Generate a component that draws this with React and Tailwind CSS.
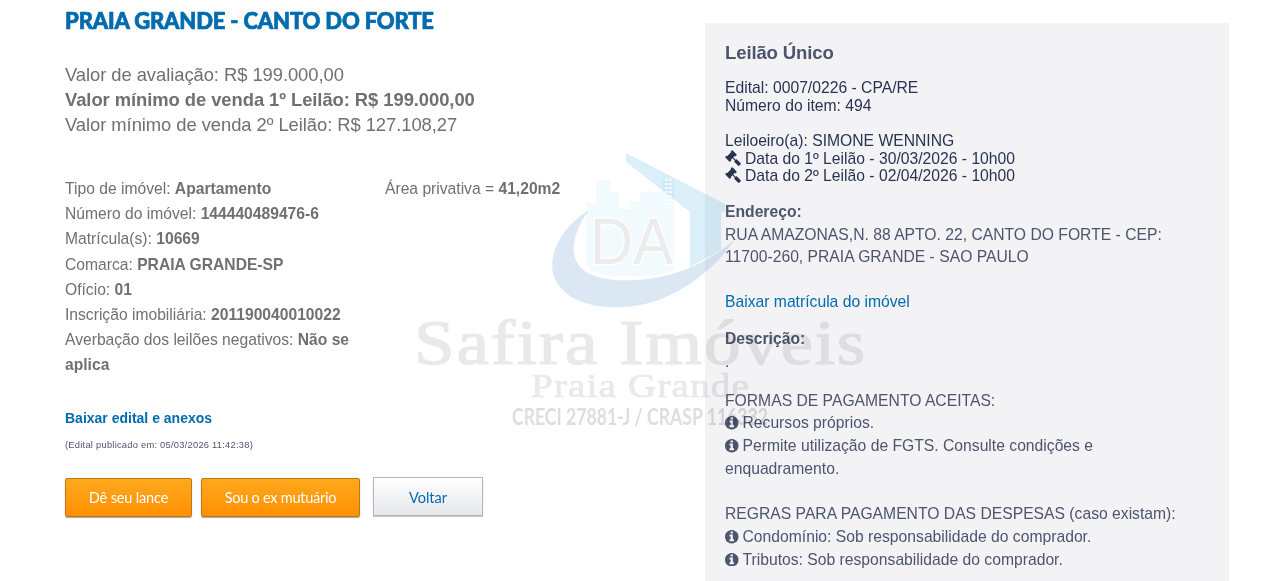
const details = [
  { label: 'Tipo de imóvel', value: 'Apartamento' },
  { label: 'Número do imóvel', value: '144440489476-6' },
  { label: 'Matrícula(s)', value: '10669' },
  { label: 'Comarca', value: 'PRAIA GRANDE-SP' },
  { label: 'Ofício', value: '01' },
  { label: 'Inscrição imobiliária', value: '201190040010022' },
  { label: 'Averbação dos leilões negativos', value: 'Não se aplica' },
]

const auctionDates = [
  'Data do 1º Leilão - 30/03/2026 - 10h00',
  'Data do 2º Leilão - 02/04/2026 - 10h00',
]

export default function App() {
  return (
    <div className="relative flex h-[581px] w-[1280px] overflow-hidden bg-white pl-[65px] font-['Liberation_Sans',Arial,sans-serif]">
      <PropertyInfo />
      <AuctionPanel />
      <Watermark />
    </div>
  )
}

function PropertyInfo() {
  return (
    <main className="w-[640px] shrink-0 text-[#707070]">
      <h1 className="pt-[7px] font-['Lato',sans-serif] text-[22px] leading-[28px] font-black tracking-[-0.16px] whitespace-nowrap text-[#006bae] [-webkit-text-stroke:0.7px_#006bae]">
        PRAIA GRANDE - CANTO DO FORTE
      </h1>

      {/* Prices */}
      <div className="mt-[27px] text-[18.4px] leading-[25px] tracking-[-0.06px] whitespace-nowrap">
        <p>Valor de avaliação: R$ 199.000,00</p>
        <p className="font-bold">Valor mínimo de venda 1º Leilão: R$ 199.000,00</p>
        <p>Valor mínimo de venda 2º Leilão: R$ 127.108,27</p>
      </div>

      {/* Details */}
      <div className="mt-[39px] flex text-[15.65px] leading-[25.2px]">
        <div className="w-[320px] pr-5">
          {details.map((item) => (
            <p key={item.label}>
              {item.label}: <strong>{item.value}</strong>
            </p>
          ))}
        </div>
        <p>
          Área privativa = <strong>41,20m2</strong>
        </p>
      </div>

      <a href="#" className="mt-[30px] block text-[14px] leading-[20px] font-bold text-[#006bae]">
        Baixar edital e anexos
      </a>
      <p className="mt-[11px] text-[9.3px] leading-[12px] tracking-[0.26px] text-[#4c556c]">
        (Edital publicado em: 05/03/2026 11:42:38)
      </p>

      {/* Actions */}
      <div className="mt-[26px] flex font-['Lato',sans-serif] text-[14.5px]">
        <button className="mt-px h-[39px] w-[127px] rounded-[2px] border border-[#bd7a12] bg-linear-to-b from-[#ffa81c] to-[#ff9000] pt-[2px] tracking-[-0.15px] text-white shadow-[0_1px_1px_#aaa]">
          Dê seu lance
        </button>
        <button className="mt-px ml-[9px] h-[39px] w-[159px] rounded-[2px] border border-[#bd7a12] bg-linear-to-b from-[#ffa81c] to-[#ff9000] pt-[2px] tracking-[-0.25px] text-white shadow-[0_1px_1px_#aaa]">
          Sou o ex mutuário
        </button>
        <button className="ml-[13px] h-[39px] w-[110px] border border-[#b1b5c3] bg-linear-to-b from-white to-[#e6e7eb] pt-[3px] text-[#006bae] shadow-[0_1px_1px_#ccc]">
          Voltar
        </button>
      </div>
    </main>
  )
}

function AuctionPanel() {
  return (
    <aside className="mt-[23px] w-[524px] shrink-0 bg-[#f3f3f6] px-5 text-[15.7px] leading-[22.8px] whitespace-nowrap text-[#4c556c]">
      <h2 className="pt-[18px] text-[18.6px] leading-[24px] font-bold tracking-[-0.15px]">Leilão Único</h2>

      <div className="mt-[14px] leading-[17.6px] text-[#293352]">
        <p>Edital: 0007/0226 - CPA/RE</p>
        <p>Número do item: 494</p>
        <p className="mt-[17.8px]">Leiloeiro(a): SIMONE WENNING</p>
        {auctionDates.map((date) => (
          <p key={date} className="flex items-center gap-1">
            <GavelIcon />
            {date}
          </p>
        ))}
      </div>

      <div className="mt-[16px]">
        <p className="font-bold">Endereço:</p>
        <p>RUA AMAZONAS,N. 88 APTO. 22, CANTO DO FORTE - CEP:</p>
        <p>11700-260, PRAIA GRANDE - SAO PAULO</p>
      </div>

      <a href="#" className="mt-[22px] block text-[#006bae]">
        Baixar matrícula do imóvel
      </a>

      <div className="mt-[14px]">
        <p className="font-bold">Descrição:</p>
        <p>.</p>
      </div>

      <div className="mt-[16px]">
        <p>FORMAS DE PAGAMENTO ACEITAS:</p>
        <InfoLine>Recursos próprios.</InfoLine>
        <InfoLine>Permite utilização de FGTS. Consulte condições e</InfoLine>
        <p>enquadramento.</p>
      </div>

      <div className="mt-[22.4px]">
        <p>REGRAS PARA PAGAMENTO DAS DESPESAS (caso existam):</p>
        <InfoLine>Condomínio: Sob responsabilidade do comprador.</InfoLine>
        <InfoLine>Tributos: Sob responsabilidade do comprador.</InfoLine>
      </div>
    </aside>
  )
}

function InfoLine({ children }) {
  return (
    <p className="flex items-center gap-1">
      <InfoIcon />
      {children}
    </p>
  )
}

function GavelIcon() {
  return (
    <svg className="mb-px size-4" viewBox="0 0 1792 1792" fill="currentColor">
      <path d="M1771 1536q0 53-37 90l-107 108q-39 37-91 37-53 0-90-37l-363-364q-38-36-38-90 0-53 43-96l-256-256-126 126q-14 14-34 14t-34-14q2 2 12.5 12t12.5 13 10 11.5 10 13.5 6 13.5 5.5 16.5 1.5 18q0 38-28 68-3 3-16.5 18t-19 20.5-18.5 16.5-22 15.5-22 9-26 4.5q-40 0-68-28l-408-408q-28-28-28-68 0-13 4.5-26t9-22 15.5-22 16.5-18.5 20.5-19 18-16.5q30-28 68-28 10 0 18 1.5t16.5 5.5 13.5 6 13.5 10 11.5 10 13 12.5 12 12.5q-14-14-14-34t14-34l348-348q14-14 34-14t34 14q-2-2-12.5-12t-12.5-13-10-11.5-10-13.5-6-13.5-5.5-16.5-1.5-18q0-38 28-68 3-3 16.5-18t19-20.5 18.5-16.5 22-15.5 22-9 26-4.5q40 0 68 28l408 408q28 28 28 68 0 13-4.5 26t-9 22-15.5 22-16.5 18.5-20.5 19-18 16.5q-30 28-68 28-10 0-18-1.5t-16.5-5.5-13.5-6-13.5-10-11.5-10-13-12.5-12-12.5q14 14 14 34t-14 34l-126 126 256 256q43-43 96-43 52 0 91 37l363 363q37 39 37 91z" />
    </svg>
  )
}

function InfoIcon() {
  return (
    <svg className="mb-px size-[13.5px]" viewBox="128 128 1536 1536" fill="currentColor">
      <path d="M1152 1376v-160q0-14-9-23t-23-9h-96v-512q0-14-9-23t-23-9h-320q-14 0-23 9t-9 23v160q0 14 9 23t23 9h96v320h-96q-14 0-23 9t-9 23v160q0 14 9 23t23 9h448q14 0 23-9t9-23zm-128-896v-160q0-14-9-23t-23-9h-192q-14 0-23 9t-9 23v160q0 14 9 23t23 9h192q14 0 23-9t9-23zm640 416q0 209-103 385.5t-279.5 279.5-385.5 103-385.5-103-279.5-279.5-103-385.5 103-385.5 279.5-279.5 385.5-103 385.5 103 279.5 279.5 103 385.5z" />
    </svg>
  )
}

// Agency logo stamped over the page
function Watermark() {
  return (
    <svg
      className="pointer-events-none absolute top-[140px] left-[400px]"
      width="480"
      height="300"
      viewBox="400 140 480 300"
    >
      {/* Skyline */}
      <path
        d="M586 203H596V180H610V192H619V209H630V201H640V192H662V179H674V271L650 276H610L592 271L586 264z"
        fill="#38b2e8"
        fillOpacity="0.07"
      />
      <path
        d="M599 184v84M604 184v84M609 184v84M614 195v75M622 211v59M632 204v65M638 204v65M648 196v73M655 196v73M666 212v54M671 212v54"
        stroke="#fff"
        strokeOpacity="0.5"
        strokeWidth="1.5"
        strokeDasharray="2 2"
      />
      {/* Roof and wall */}
      <path
        d="M626 153L725 204V212H721V250L690 267V212L626 162z"
        fill="#35a8dc"
        fillOpacity="0.18"
      />
      <path
        d="M665 180h8M665 184h8M665 188h8M665 192h8M665 196h8M665 200h8M665 204h8"
        stroke="#fff"
        strokeOpacity="0.7"
        strokeWidth="2"
        strokeDasharray="3 1"
      />
      {/* Swoosh */}
      <path
        d="M589 210C559 228 546 259 555 279C566 303 602 313 645 304C681 296 717 267 735 239C718 255 695 266 682 271C650 282 607 284 588 273C565 260 573 232 589 210z"
        fill="#2070b8"
        fillOpacity="0.16"
      />
      <text
        x="590"
        y="264"
        fontSize="64"
        fontFamily="'Liberation Sans', sans-serif"
        textLength="83"
        lengthAdjust="spacingAndGlyphs"
        fill="#ececec"
        stroke="#fff"
        strokeOpacity="0.8"
        strokeWidth="3"
        paintOrder="stroke"
      >
        DA
      </text>
      <text
        x="414"
        y="364"
        fontSize="64"
        fontFamily="'Liberation Serif', serif"
        letterSpacing="1.5"
        textLength="453"
        lengthAdjust="spacingAndGlyphs"
        fill="#e9e9e9"
        stroke="#e9e9e9"
        strokeWidth="1.2"
        className="mix-blend-multiply"
      >
        Safira Imóveis
      </text>
      <text
        x="531"
        y="397"
        fontSize="34"
        fontFamily="'Liberation Serif', serif"
        letterSpacing="1"
        textLength="219"
        lengthAdjust="spacingAndGlyphs"
        fill="#e9e9e9"
        stroke="#e9e9e9"
        strokeWidth="0.7"
        className="mix-blend-multiply"
      >
        Praia Grande
      </text>
      <text
        x="512"
        y="425"
        fontSize="22.5"
        fontFamily="Lato, sans-serif"
        fontWeight="700"
        textLength="256"
        lengthAdjust="spacingAndGlyphs"
        fill="#dedede"
        className="mix-blend-multiply"
      >
        CRECI 27881-J / CRASP 116332
      </text>
    </svg>
  )
}
